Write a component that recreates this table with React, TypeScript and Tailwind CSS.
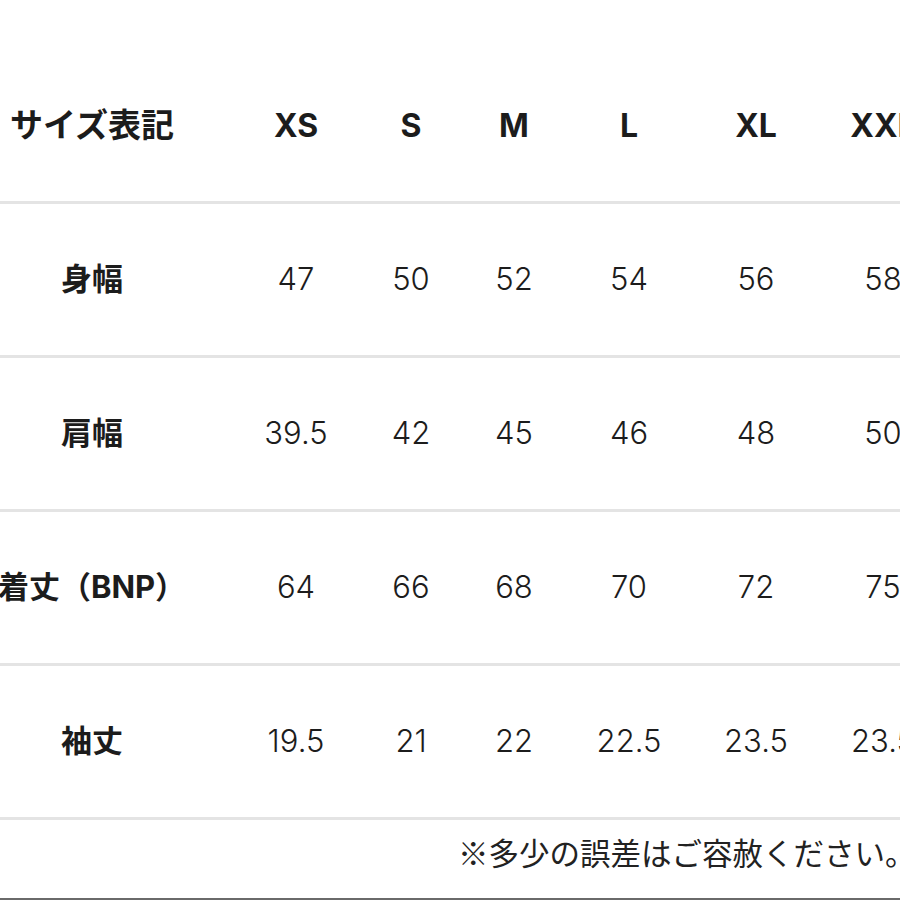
import React from 'react';

const sizes = ['XS', 'S', 'M', 'L', 'XL', 'XXL'];

const rows: { label: string; values: string[] }[] = [
    { label: '身幅', values: ['47', '50', '52', '54', '56', '58'] },
    { label: '肩幅', values: ['39.5', '42', '45', '46', '48', '50'] },
    { label: '着丈（BNP）', values: ['64', '66', '68', '70', '72', '75'] },
    { label: '袖丈', values: ['19.5', '21', '22', '22.5', '23.5', '23.5'] },
];

// 列幅はスクショの中心位置に合わせて調整
const gridCols = 'grid grid-cols-[246px_100px_130px_76px_154px_100px_154px]';

const App: React.FC = () => {
    return (
        <div className="w-[900px] h-[900px] overflow-hidden bg-white text-[#1c1c1c] font-['Inter','Noto_Sans_CJK_JP',sans-serif] flex flex-col">
            <div className="pt-[50px]">
                {/* ヘッダー行 */}
                <div className={`${gridCols} h-[154px] border-b-[3px] border-[#e4e4e4] items-center`}>
                    <div className="flex justify-center pr-[62px] whitespace-nowrap text-[33px] font-bold">
                        サイズ表記
                    </div>
                    {sizes.map((s) => (
                        <div key={s} className="flex justify-center whitespace-nowrap text-[32px] font-bold">
                            {s}
                        </div>
                    ))}
                </div>

                {rows.map((row) => (
                    <div
                        key={row.label}
                        className={`${gridCols} h-[154px] border-b-[3px] border-[#e4e4e4] items-center`}
                    >
                        <div className="flex justify-center pr-[62px] whitespace-nowrap text-[31px] font-bold">
                            {row.label}
                        </div>
                        {row.values.map((v, i) => (
                            <div key={i} className="flex justify-center whitespace-nowrap text-[31px] font-light">
                                {v}
                            </div>
                        ))}
                    </div>
                ))}
            </div>

            <div className="h-[78px] pt-[14px] pl-[458px] whitespace-nowrap text-[30.5px] leading-[36px] font-['Noto_Sans_CJK_JP',sans-serif] text-[#222]">
                ※多少の誤差はご容赦ください。
            </div>
            <div className="h-[2px] bg-[#6a6a6a]" />
        </div>
    );
};

export default App;
